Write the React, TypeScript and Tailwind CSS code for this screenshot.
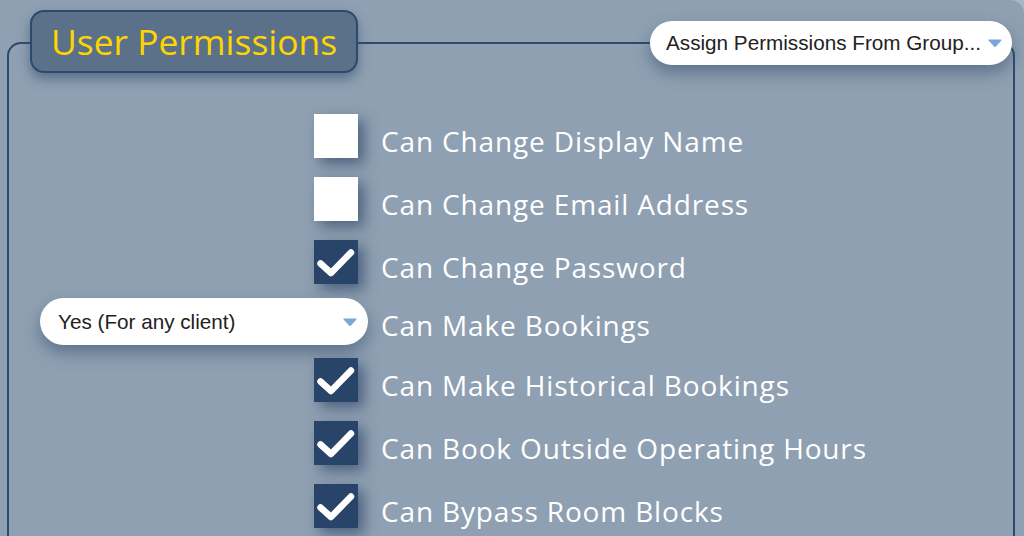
import React from 'react';

const sans = { fontFamily: '"Open Sans", "Noto Sans", sans-serif' };
const arial = { fontFamily: '"Liberation Sans", Arial, sans-serif' };

type Row =
  | { kind: 'check'; label: string; checked: boolean }
  | { kind: 'select'; label: string; value: string };

const rows: Row[] = [
  { kind: 'check', label: 'Can Change Display Name', checked: false },
  { kind: 'check', label: 'Can Change Email Address', checked: false },
  { kind: 'check', label: 'Can Change Password', checked: true },
  { kind: 'select', label: 'Can Make Bookings', value: 'Yes (For any client)' },
  { kind: 'check', label: 'Can Make Historical Bookings', checked: true },
  { kind: 'check', label: 'Can Book Outside Operating Hours', checked: true },
  { kind: 'check', label: 'Can Bypass Room Blocks', checked: true },
];

function Caret() {
  return (
    <svg width="14" height="8" viewBox="0 0 14 8" className="shrink-0">
      <path d="M1 1 L13 1 L7 7.5 Z" fill="#7ba6d6" stroke="#7ba6d6" strokeWidth="1.2" strokeLinejoin="round" />
    </svg>
  );
}

function Checkbox({ checked }: { checked: boolean }) {
  return (
    <div
      className={`w-[44px] h-[44px] flex items-center justify-center shadow-[6px_6px_14px_rgba(55,78,110,0.75)] ${
        checked ? 'bg-[#284469]' : 'bg-white'
      }`}
    >
      {checked && (
        <svg width="44" height="44" viewBox="0 0 44 44">
          <path d="M6.5 23.5 L17 33 L37 12.5" fill="none" stroke="white" strokeWidth="6.5" strokeLinecap="round" strokeLinejoin="round" />
        </svg>
      )}
    </div>
  );
}

function Label({ text }: { text: string }) {
  return (
    <span className="ml-[13px] mt-[8px] text-[28px] leading-[38px] tracking-[0.85px] text-white whitespace-nowrap" style={sans}>
      {text}
    </span>
  );
}

export default function App() {
  return (
    <div className="w-[1024px] h-[536px] overflow-hidden bg-[#a9b5c3]">
      <div className="relative w-full h-full bg-[#8fa0b2] rounded-tr-[14px] pt-[42px] pl-[7px] pr-[9px]">
        <div className="h-[600px] border-2 border-[#2c4a6e] rounded-[14px] pt-[70px] pl-[31px]">
          <div className="flex flex-col gap-[19px]">
            {rows.map((row) =>
              row.kind === 'check' ? (
                <div key={row.label} className="flex items-start h-[44px]">
                  <div className="w-[328px] flex justify-end pr-[10px]">
                    <Checkbox checked={row.checked} />
                  </div>
                  <Label text={row.label} />
                </div>
              ) : (
                <div key={row.label} className="flex items-start h-[47px] -mt-[5px] -mb-[6px]">
                  <div
                    className="w-[328px] h-[47px] bg-white rounded-full flex items-center justify-between pl-[18px] pr-[11px] shadow-[0_8px_16px_rgba(55,78,110,0.55)]"
                    style={arial}
                  >
                    <span className="text-[20.7px] text-[#222] whitespace-nowrap">{row.value}</span>
                    <Caret />
                  </div>
                  <Label text={row.label} />
                </div>
              )
            )}
          </div>
        </div>

        <div className="absolute left-[30px] top-[10px] w-[328px] h-[63px] rounded-[14px] border-2 border-[#2c4a6e] bg-[#5b7189] flex items-center pl-[19px] shadow-[0_6px_12px_rgba(55,78,110,0.6)]">
          <span className="text-[35.4px] leading-none text-[#ffd500] whitespace-nowrap" style={sans}>
            User Permissions
          </span>
        </div>

        <div
          className="absolute left-[650px] top-[21px] w-[362px] h-[44px] rounded-full bg-white flex items-center justify-between pl-[16px] pr-[10px] shadow-[0_8px_16px_rgba(55,78,110,0.55)]"
          style={arial}
        >
          <span className="text-[20.7px] text-[#222] whitespace-nowrap">Assign Permissions From Group...</span>
          <Caret />
        </div>
      </div>
    </div>
  );
}
